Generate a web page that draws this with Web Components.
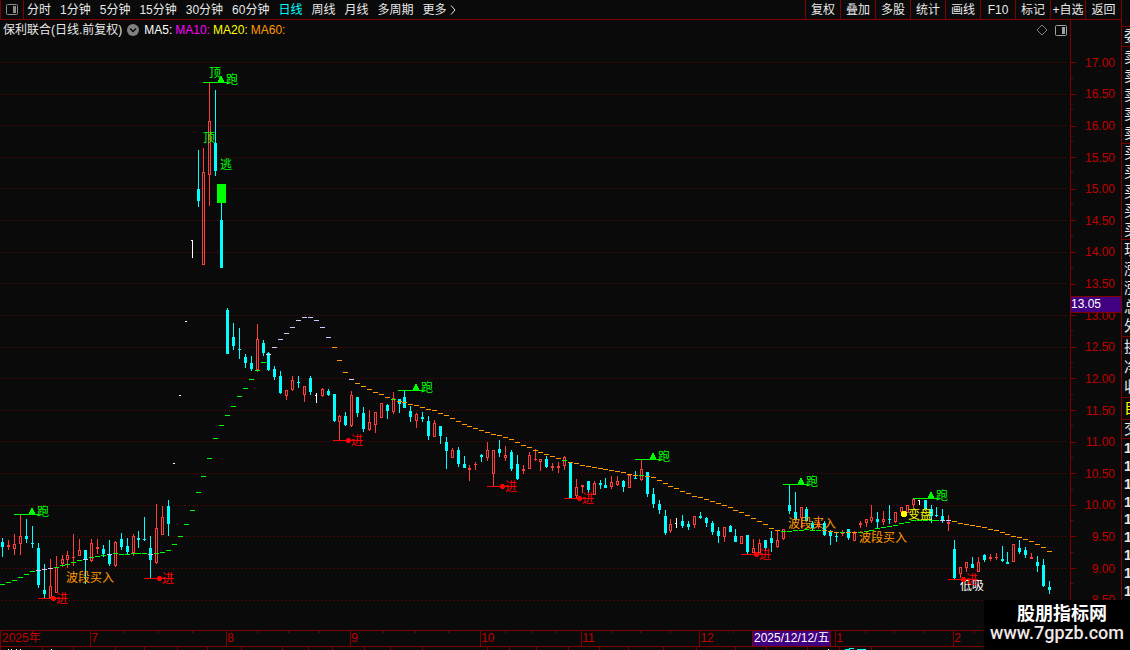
<!DOCTYPE html>
<html lang="zh-CN">
<head>
<meta charset="utf-8">
<title>保利联合 日线</title>
<style>
  html, body {
    height: 100%;
    margin: 0;
  }
  body {
    background: #0a0a0a;
    color: #e8e8e8;
    font-family: "Liberation Sans", "Noto Sans CJK SC", sans-serif;
    font-size: 12px;
    line-height: 18px;
    overflow: hidden;
    --line: #800000;
    --red: #c00000;
    --mark: #400080;
  }
</style>
</head>
<body>
<stock-app></stock-app>

<script>
// x, kind (u up / d down / w flat), high, body top, body bottom, low, MA60, MA60 colour
const BARS = `
2 d 538 542 547 557 584 g
8 u 540 545 547 550 582 g
14 u 534 544 549 555 580 g
20 u 515 536 544 555 577 g
26 d 519 536 539 543 574 g
32 d 526 543 544 548 571 g
38 d 543 548 585 588 570 v
44 d 564 590 594 598 569 v
50 u 559 586 598 598 568 v
56 u 556 567 593 593 567 g
62 u 555 559 564 567 565 g
67 u 551 555 560 568 564 g
73 u 534 557 558 566 562 g
79 u 539 550 556 556 560 g
85 d 550 550 560 584 559 v
91 u 539 543 561 562 557 g
97 u 539 547 549 554 556 g
103 d 545 549 554 557 555 g
109 d 540 555 564 566 554 v
115 u 541 542 566 567 553 g
121 d 533 539 547 550 554 g
127 d 538 546 552 554 554 g
133 u 534 536 553 556 553 g
138 d 531 538 540 548 553 g
144 d 517 539 540 541 553 g
150 d 536 548 560 578 554 v
156 u 504 528 563 564 553 g
162 u 506 517 535 535 552 g
168 d 500 506 524 536 550 g
174 w 463 463 463 464 544 g
180 w 395 395 395 396 536 g
186 w 321 321 321 322 524 g
192 w 240 240 240 258 510 g
198 d 150 189 201 207 492 g
203 u 148 172 265 265 476 g
209 u 82 121 175 206 458 g
215 d 90 143 171 176 438 g
221 d 190 220 268 268 425 g
227 d 308 310 354 354 415 g
233 d 323 337 346 350 406 g
239 d 328 349 350 359 396 g
245 d 354 357 363 368 388 g
251 d 356 363 369 371 379 g
257 u 324 339 370 372 370 g
263 d 340 343 353 356 362 g
268 d 352 353 370 371 354 v
274 d 366 369 377 380 347 v
280 d 371 376 393 394 339 v
286 u 390 390 396 400 333 v
292 u 376 380 390 391 327 v
298 d 376 382 383 388 320 v
304 u 386 386 395 402 317 v
310 d 376 378 392 395 317 v
316 w 393 395 395 403 320 v
322 u 388 389 396 397 327 v
328 d 389 391 395 396 337 v
334 d 394 394 421 422 347 o
339 u 415 416 422 440 360 o
345 d 412 416 425 426 372 o
351 u 391 395 426 427 379 v
357 d 397 397 413 417 383 o
363 d 407 413 429 432 386 o
369 u 410 422 430 431 389 o
375 u 412 412 425 433 392 o
381 u 403 403 418 418 394 o
387 d 404 405 411 419 397 o
393 u 392 398 412 414 399 g
399 d 399 399 404 413 401 o
404 d 391 397 408 408 402 o
410 d 406 411 417 422 404 o
416 u 413 414 421 428 405 o
422 d 412 417 419 422 407 o
428 d 416 421 436 440 409 o
434 u 420 423 437 437 410 o
440 d 426 426 436 444 413 o
446 d 437 442 451 469 415 o
452 u 448 450 458 458 418 o
458 d 447 450 464 467 421 o
464 d 456 464 468 468 424 o
469 u 465 468 470 481 426 o
475 u 462 464 465 470 428 o
481 d 454 455 457 462 430 o
487 u 442 450 458 461 432 o
493 u 450 450 474 486 434 o
499 d 440 449 453 457 435 o
505 u 446 455 458 461 437 o
511 d 450 452 469 471 439 o
517 d 455 464 479 480 442 o
523 u 465 469 471 474 445 o
529 u 452 455 469 469 447 o
535 u 449 459 460 461 450 o
540 u 459 459 462 471 452 o
546 d 456 459 467 468 454 o
552 u 463 466 468 471 456 o
558 u 462 466 468 473 458 o
564 u 456 457 466 470 460 g
570 d 463 463 498 498 462 o
576 u 479 487 496 498 463 o
582 u 485 485 487 493 465 o
588 d 481 481 490 493 466 o
594 u 481 483 495 495 467 o
600 d 480 483 485 489 468 o
605 d 478 485 488 488 469 o
611 u 476 482 487 489 470 o
617 u 476 481 485 486 471 o
623 d 480 481 487 492 472 o
629 u 474 475 488 488 474 o
635 d 471 478 479 479 475 o
641 u 460 469 480 481 475 g
647 d 472 472 494 497 476 o
653 d 488 494 504 508 477 o
659 d 500 504 510 514 480 o
665 d 510 516 533 535 483 o
670 u 519 524 531 533 486 o
676 w 518 523 523 528 488 o
682 d 515 521 526 528 491 o
688 d 521 524 527 530 493 o
694 u 516 516 525 528 496 o
700 d 512 516 518 519 497 o
706 d 517 518 523 527 499 o
712 d 521 523 532 535 501 o
718 d 527 531 536 543 503 o
724 u 527 527 537 542 505 o
730 d 525 526 532 532 507 o
735 d 529 536 542 542 510 o
741 u 536 536 544 544 512 o
747 d 535 535 552 554 515 o
753 u 539 548 553 553 518 o
759 u 539 543 553 553 521 o
765 d 540 540 548 550 524 o
771 d 531 538 543 552 528 o
777 u 531 540 547 548 530 o
783 u 529 529 539 540 531 g
789 d 485 505 511 514 531 g
795 d 492 512 520 521 530 g
801 u 507 507 518 528 530 g
806 d 507 509 521 521 529 g
812 d 521 523 528 530 530 g
818 u 516 522 527 529 530 g
824 d 521 523 535 536 530 o
830 d 530 532 536 545 531 o
836 d 532 536 537 542 532 o
842 u 530 532 534 536 532 g
848 d 529 529 538 540 532 o
854 u 531 533 541 541 532 o
860 u 521 523 525 528 532 g
866 u 519 519 523 527 531 g
871 u 505 517 521 523 530 g
877 d 512 519 522 528 528 g
883 u 511 519 522 525 527 g
889 d 505 519 520 524 526 g
895 u 512 512 522 523 525 g
901 u 507 507 512 514 523 g
907 u 505 505 513 513 522 g
913 u 499 499 505 508 520 g
919 w 500 500 500 505 520 g
925 d 500 500 509 509 520 g
931 d 505 509 516 523 520 g
936 d 507 515 516 517 520 g
942 d 509 516 521 523 520 v
948 u 515 522 524 531 520 v
954 d 540 549 578 579 521 o
960 u 567 567 574 578 523 o
966 u 562 562 568 572 524 o
972 d 557 564 568 568 525 o
978 u 557 562 572 572 526 o
984 d 554 555 560 562 527 o
990 u 554 557 559 561 529 o
996 u 553 557 558 560 530 o
1002 d 546 559 561 562 532 o
1007 d 552 562 564 564 534 o
1013 u 544 544 562 562 536 o
1019 d 540 548 552 554 537 o
1025 d 547 550 555 558 539 o
1031 u 553 557 559 559 541 o
1037 d 556 562 566 572 544 o
1043 d 559 565 586 587 547 o
1049 d 581 587 590 594 551 o`.trim().split('\n').map((row) => row.split(' '));

const MA_COLORS = { g: '#00ff00', v: '#ccccff', o: '#ff9900' };
const SELLS = [[20, 514], [209, 82], [404, 390], [641, 459], [789, 484], [919, 498]];
const BUYS = [[44, 598], [150, 578], [339, 440], [493, 486], [570, 498], [747, 554], [954, 579]];
const NOTES = [
  ['顶', 209, 77, '#00ff00'],
  ['顶', 203, 142, '#00ff00'],
  ['逃', 220, 169, '#00ff00'],
  ['波段买入', 66, 582, '#ff9900'],
  ['波段买入', 788, 528, '#ff9900'],
  ['波段买入', 859, 542, '#ff9900'],
  ['变盘', 908, 519, '#ffff00'],
  ['低吸', 960, 590, '#ffffff'],
];

class ToolBar extends HTMLElement {
  constructor() {
    super();
    this.attachShadow({ mode: 'open' });
  }

  connectedCallback() {
    const periods = ['分时', '1分钟', '5分钟', '15分钟', '30分钟', '60分钟', '日线', '周线', '月线', '多周期'];
    const tools = ['复权', '叠加', '多股', '统计', '画线', 'F10', '标记', '+自选', '返回'];
    this.shadowRoot.innerHTML = `
    <style>
      :host {
        display: flex;
        justify-content: space-between;
        height: 19px;
        border-bottom: 1px solid var(--line);
      }
      nav {
        display: flex;
      }
      .periods {
        gap: 9px;
      }
      button {
        padding: 0;
        border: 0;
        background: none;
        color: inherit;
        font: inherit;
        white-space: nowrap;
        cursor: pointer;
      }
      button.on {
        color: #00ffff;
      }
      .toggle {
        display: flex;
        align-items: center;
        justify-content: center;
        width: 24px;
        margin-right: -6px;
        box-sizing: border-box;
        border: solid var(--line);
        border-width: 0 1px;
      }
      .more {
        display: flex;
        align-items: center;
        gap: 3px;
      }
      .tools button {
        width: 35px;
        box-sizing: border-box;
        border-left: 1px solid var(--line);
      }
      .tools button:last-child {
        width: 36px;
      }
    </style>
    <nav class="periods">
      <button class="toggle" aria-label="侧栏">
        <svg width="12" height="11" fill="none" stroke="#8c8c8c">
          <rect x=".5" y=".5" width="11" height="10" rx="1"/>
          <rect x="7" y="2" width="3" height="7" fill="#8c8c8c" stroke="none"/>
        </svg>
      </button>
      ${periods.map((p) => `<button${p === '日线' ? ' class="on"' : ''}>${p}</button>`).join('')}
      <button class="more">更多<svg width="6" height="10" fill="none" stroke="#e8e8e8"><path d="M1 .5 5 5 1 9.5"/></svg></button>
    </nav>
    <nav class="tools">${tools.map((t) => `<button>${t}</button>`).join('')}</nav>
    `;
  }
}
customElements.define('tool-bar', ToolBar);

class ChartHeader extends HTMLElement {
  constructor() {
    super();
    this.attachShadow({ mode: 'open' });
    this.shadowRoot.innerHTML = `
    <style>
      :host {
        display: flex;
        align-items: center;
        justify-content: space-between;
        height: 20px;
        padding: 0 3px;
        line-height: 20px;
        white-space: nowrap;
      }
      div {
        display: flex;
        align-items: center;
        gap: 5px;
      }
      .averages {
        gap: 3px;
      }
      .icons {
        gap: 7px;
      }
      button {
        display: flex;
        padding: 0;
        border: 0;
        background: none;
      }
    </style>
    <div>
      <span>保利联合(日线.前复权)</span>
      <button aria-label="展开">
        <svg width="12" height="12"><circle cx="6" cy="6" r="6" fill="#808080"/><path d="M3 4.5 6 7.5 9 4.5" fill="none" stroke="#0a0a0a" stroke-width="1.5"/></svg>
      </button>
      <div class="averages"><slot></slot></div>
    </div>
    <div class="icons">
      <button aria-label="标记">
        <svg width="12" height="12" fill="none" stroke="#808080"><path d="M6 1 11 6 6 11 1 6Z"/></svg>
      </button>
      <button aria-label="面板">
        <svg width="12" height="11" fill="none" stroke="#a0a0a0"><rect x=".5" y=".5" width="11" height="10" rx="1"/><rect x="7" y="2" width="3" height="7" fill="#a0a0a0" stroke="none"/></svg>
      </button>
    </div>
    `;
  }
}
customElements.define('chart-header', ChartHeader);

class CandleChart extends HTMLElement {
  constructor() {
    super();
    this.attachShadow({ mode: 'open' });
  }

  connectedCallback() {
    this.shadowRoot.innerHTML = `
    <style>
      :host {
        display: block;
        flex: 1;
        min-height: 0;
      }
      svg {
        display: block;
        width: 100%;
        height: 100%;
      }
      text {
        font-size: 12px;
      }
    </style>
    <svg viewBox="0 40 1070 590" preserveAspectRatio="xMinYMin meet" shape-rendering="crispEdges">
      ${this.grid()}
      ${BARS.map((bar) => this.candle(bar)).join('')}
      <rect x="217" y="184" width="9" height="19" fill="#00ff00"/>
      ${BARS.map(([x, , , , , , y, c]) => `<rect x="${x - 2}" y="${y}" width="5" height="1" fill="${MA_COLORS[c]}"/>`).join('')}
      ${SELLS.map(([x, y]) => this.sell(x, y)).join('')}
      ${NOTES.map(([label, x, y, color]) => `<text x="${x}" y="${y}" fill="${color}">${label}</text>`).join('')}
      <circle cx="904" cy="514" r="3" fill="#ffff00"/>
      ${BUYS.map(([x, y]) => this.buy(x, y)).join('')}
    </svg>
    `;
  }

  grid() {
    let lines = '';
    for (let i = 0; i < 18; i += 1) {
      const y = Math.floor(62.4 + i * 31.63) + 0.5;
      lines += `<path d="M1 ${y}H1067" stroke="#800000" stroke-dasharray="1 3"/>`;
    }
    return lines;
  }

  candle(bar) {
    const kind = bar[1];
    const [x, , high, top, bottom, low] = bar.map(Number);
    const box = (left, from, width, to, color) => (to > from
      ? `<rect x="${left}" y="${from}" width="${width}" height="${to - from}" fill="${color}"/>`
      : '');
    if (kind === 'w') {
      return box(x, high, 1, low, '#ffffff') + box(x - 1, top, 2, top + 1, '#ffffff');
    }
    const color = kind === 'd' ? '#00ffff' : '#ff3c3c';
    let shapes = box(x, high, 1, low, color) + box(x - 1, top, 3, Math.max(bottom, top + 1), color);
    if (kind === 'u') {
      shapes += box(x, top + 1, 1, bottom - 1, '#0a0a0a');
    }
    return shapes;
  }

  sell(x, y) {
    return `<g fill="#00ff00"><rect x="${x - 6}" y="${y}" width="25" height="1"/>
      <path d="M${x + 11} ${y - 6}h2v2h1v2h1v2h-6v-2h1v-2h1z"/><text x="${x + 17}" y="${y + 2}">跑</text></g>`;
  }

  buy(x, y) {
    return `<g fill="#ff0000"><rect x="${x - 6}" y="${y}" width="30" height="1"/>
      <path d="M${x + 8} ${y - 2}h3v1h1v3h-1v1h-3v-1h-1v-3h1z"/><text x="${x + 12}" y="${y + 5}">进</text></g>`;
  }
}
customElements.define('candle-chart', CandleChart);

class PriceAxis extends HTMLElement {
  constructor() {
    super();
    this.attachShadow({ mode: 'open' });
  }

  connectedCallback() {
    let rows = '';
    for (let p = 17; p >= 8.5; p -= 0.5) {
      rows += `<li>${p.toFixed(2)}</li>`;
    }
    this.shadowRoot.innerHTML = `
    <style>
      :host {
        display: flex;
        position: relative;
        width: 50px;
        border-left: 1px solid var(--line);
        color: var(--red);
      }
      ul {
        display: flex;
        flex: 1;
        flex-direction: column;
        margin: 0;
        padding: 27px 0 14px;
        list-style: none;
      }
      li {
        display: flex;
        flex: 1;
        align-items: center;
        justify-content: flex-end;
        padding-right: 6px;
        background:
          linear-gradient(var(--line), var(--line)) 0 50% / 5px 1px no-repeat,
          linear-gradient(var(--line), var(--line)) 0 100% / 2px 1px no-repeat;
      }
      output {
        position: absolute;
        top: 276px;
        left: 0;
        right: 0;
        height: 15px;
        line-height: 15px;
        border: solid var(--line);
        border-width: 1px 0;
        background: var(--mark);
        color: #ffffff;
      }
    </style>
    <ul>${rows}</ul>
    <output>13.05</output>
    `;
  }
}
customElements.define('price-axis', PriceAxis);

class TimeAxis extends HTMLElement {
  constructor() {
    super();
    this.attachShadow({ mode: 'open' });
  }

  connectedCallback() {
    // label, share of the width, number of tick intervals
    const months = [['2025年', 90, 1], ['7', 136, 4], ['8', 124, 4], ['9', 130, 4], ['10', 101, 4], ['11', 118, 4], ['12', 136, 4], ['1', 118, 4], ['2', 168, 8]];
    this.shadowRoot.innerHTML = `
    <style>
      :host {
        display: flex;
        position: relative;
        height: 15px;
        line-height: 15px;
        border: solid var(--line);
        border-width: 1px 0;
        color: var(--red);
      }
      .month {
        display: grid;
        min-width: 0;
        border-left: 1px solid var(--line);
      }
      .month > * {
        grid-area: 1 / 1;
      }
      .ticks {
        display: flex;
        height: 2px;
      }
      .ticks i {
        flex: 1;
      }
      .ticks i + i {
        border-left: 1px solid var(--line);
      }
      .first {
        padding-left: 1px;
      }
      time {
        position: absolute;
        left: 752px;
        padding: 0 1px;
        border: solid var(--line);
        border-width: 0 1px;
        background: var(--mark);
        color: #ffffff;
      }
    </style>
    ${months.map(([label, share, n]) => `
      <div class="month" style="flex: ${share} 1 0">
        <span class="${n === 1 ? 'first' : ''}">${label}</span>
        <span class="ticks">${'<i></i>'.repeat(n)}</span>
      </div>`).join('')}
    <time datetime="2025-12-12">2025/12/12/五</time>
    `;
  }
}
customElements.define('time-axis', TimeAxis);

class StatusStrip extends HTMLElement {
  constructor() {
    super();
    this.attachShadow({ mode: 'open' });
    const edges = [0, 42, 73, 115, 144, 177, 207, 241, 282, 308, 332, 364, 390, 422, 487, 509, 536, 568, 599, 628, 663, 696, 735, 766, 807, 839, 871];
    this.shadowRoot.innerHTML = `
    <style>
      :host {
        display: block;
        height: 3px;
        overflow: hidden;
      }
      svg {
        display: block;
      }
    </style>
    <svg width="984" height="3" shape-rendering="crispEdges">
      ${edges.map((x) => `<rect x="${x}" width="1" height="3" fill="#800000"/>`).join('')}
      ${[8, 11, 16, 20, 51, 828].map((x) => `<rect x="${x}" y="2" width="1" height="1" fill="#fff"/>`).join('')}
      <path d="M845 2.5h5M849 1.5h5M857 2.5h9" stroke="#00ffff"/>
    </svg>
    `;
  }
}
customElements.define('status-strip', StatusStrip);

class QuotePanel extends HTMLElement {
  constructor() {
    super();
    this.attachShadow({ mode: 'open' });
  }

  connectedCallback() {
    // labels, share of the height, class
    const groups = [['', 25, 'blank'], ['委', 20, ''], ['卖卖卖卖卖', 97, ''], ['买买买买买', 97, ''], ['现涨涨总外', 97, ''],
      ['换净收', 61, ''], ['自', 21, 'own'], ['交', 19, ''], ['111111111', 163, 'ticks'], ['', 50, 'blank']];
    this.shadowRoot.innerHTML = `
    <style>
      :host {
        display: flex;
        flex-direction: column;
        width: 8px;
        overflow: hidden;
        border-left: 1px solid var(--line);
        font-size: 15px;
      }
      section {
        display: flex;
        flex-direction: column;
        min-height: 0;
        padding-left: 2px;
        border-top: 1px solid var(--line);
      }
      .blank {
        border-color: transparent;
      }
      .own {
        color: #ffff00;
      }
      .ticks {
        font-size: 14px;
        font-weight: bold;
      }
      span {
        display: flex;
        flex: 1 1 0;
        align-items: center;
        min-height: 0;
      }
    </style>
    ${groups.map(([labels, share, name]) => `
      <section class="${name}" style="flex: ${share} 1 0">
        ${[...labels].map((c) => `<span>${c}</span>`).join('')}
      </section>`).join('')}
    `;
  }
}
customElements.define('quote-panel', QuotePanel);

class SiteMark extends HTMLElement {
  constructor() {
    super();
    this.attachShadow({ mode: 'open' });
    this.shadowRoot.innerHTML = `
    <style>
      :host {
        display: flex;
        flex-direction: column;
        align-items: center;
        position: absolute;
        right: 0;
        bottom: 0;
        width: 146px;
        height: 50px;
        box-sizing: border-box;
        padding-top: 4px;
        background: #000000;
        color: #ffffff;
      }
      b {
        padding-left: 10px;
        font-size: 18px;
        line-height: 20px;
      }
      a {
        color: #f0e8e8;
        font: 500 18px/18px Roboto, sans-serif;
        text-decoration: none;
      }
    </style>
    <b><slot></slot></b>
    <a href="#">www.7gpzb.com</a>
    `;
  }
}
customElements.define('site-mark', SiteMark);

class StockApp extends HTMLElement {
  constructor() {
    super();
    this.attachShadow({ mode: 'open' });
    this.shadowRoot.innerHTML = `
    <style>
      :host {
        display: flex;
        position: relative;
        height: 100vh;
        overflow: hidden;
      }
      main, .chart {
        display: flex;
        flex: 1;
        flex-direction: column;
        min-width: 0;
      }
      .body {
        display: flex;
        flex: 1;
        min-height: 0;
      }
    </style>
    <main>
      <tool-bar></tool-bar>
      <div class="body">
        <div class="chart">
          <chart-header>
            <span style="color: #ffffff">MA5:</span>
            <span style="color: #ff00ff">MA10:</span>
            <span style="color: #ffff00">MA20:</span>
            <span style="color: #ff9900">MA60:</span>
          </chart-header>
          <candle-chart></candle-chart>
        </div>
        <price-axis></price-axis>
      </div>
      <time-axis></time-axis>
      <status-strip></status-strip>
    </main>
    <quote-panel></quote-panel>
    <site-mark>股朋指标网</site-mark>
    `;
  }
}
customElements.define('stock-app', StockApp);
</script>
</body>
</html>
